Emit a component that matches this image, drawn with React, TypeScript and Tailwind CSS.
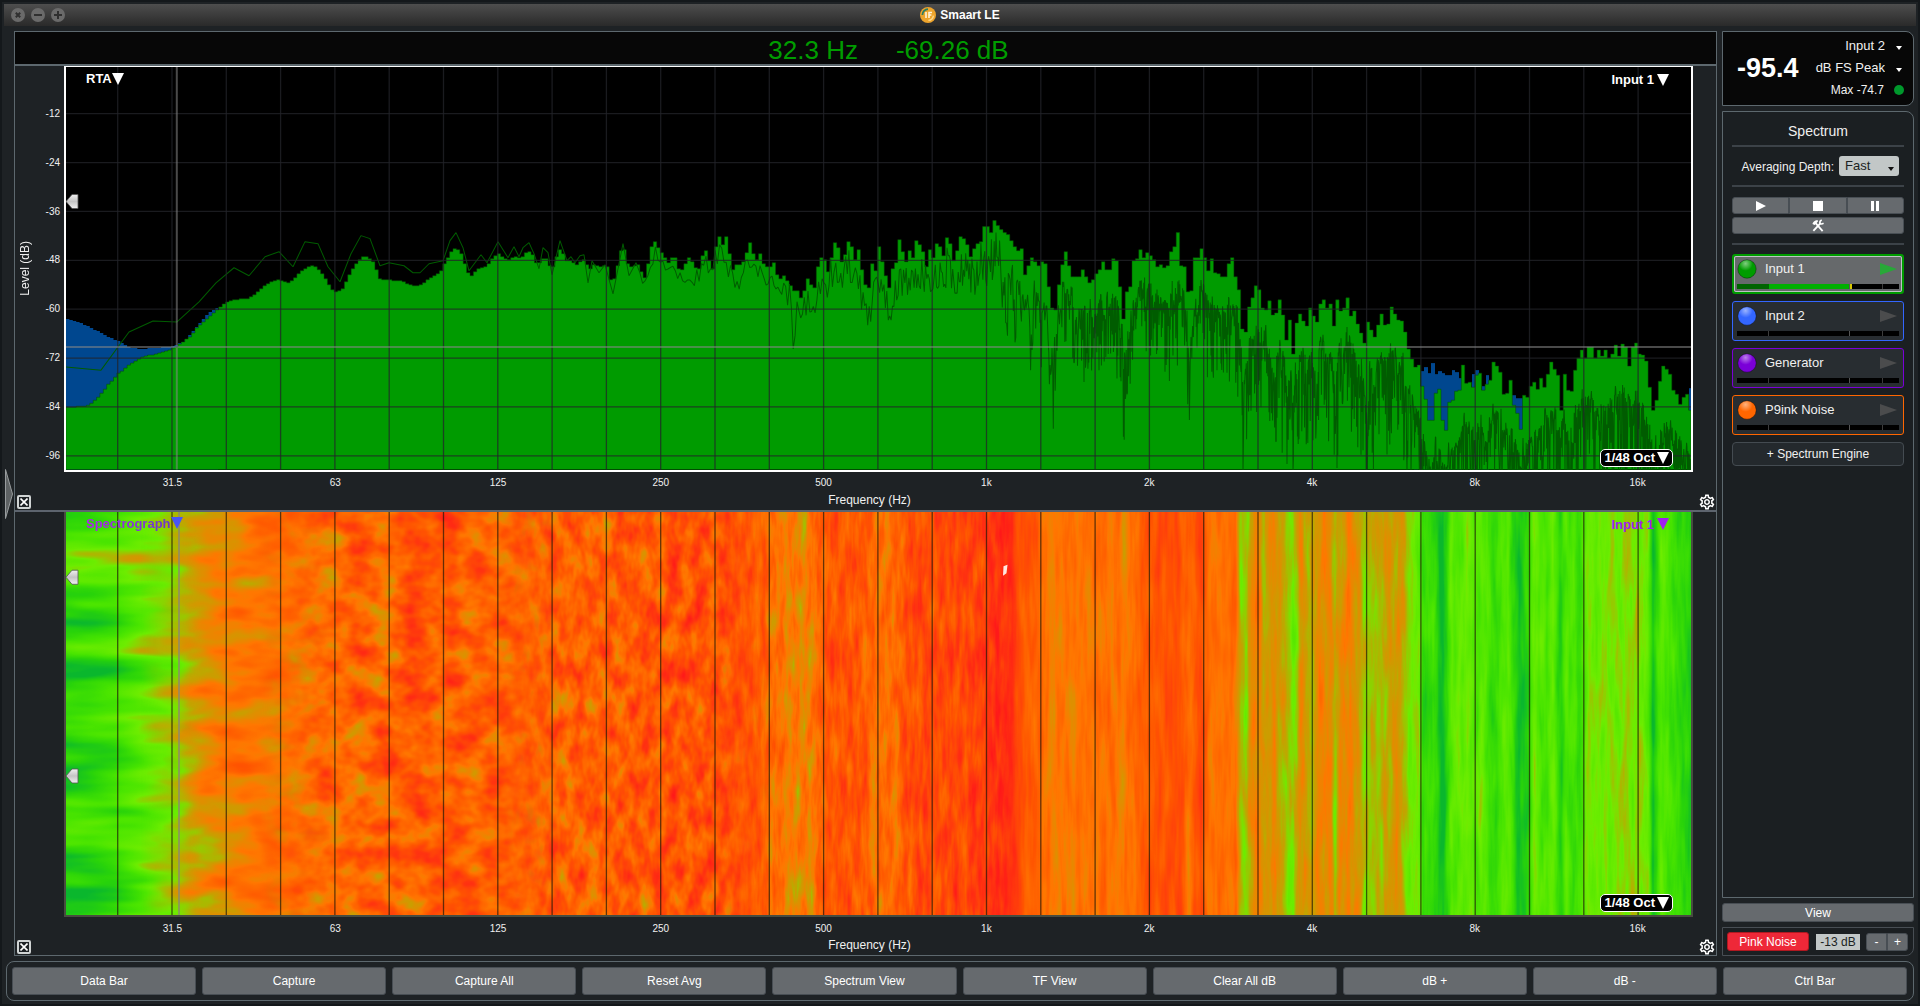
import { useMemo, useState } from 'react';
import { MdOutlineSettings } from 'react-icons/md';

// Plot coordinates: x runs 66..1691, y runs 0 dB at 67 down to 468
const LEFT = 66;
const TOP = 67;
const WIDTH = 1625;
const HEIGHT = 401;
const BAR = 3.395;

type Point = [number, number];

const lowCurve: Point[] = [
  [66, 406], [86, 405], [93, 401], [100, 394], [107, 385], [118, 373], [130, 363], [143, 356], [155, 353], [167, 350],
  [176, 346], [183, 341], [190, 336], [197, 327], [205, 320], [212, 313], [220, 306], [227, 301], [233, 299], [247, 298],
  [256, 293], [267, 283], [278, 279], [290, 282], [300, 272], [306, 267], [314, 265], [322, 272], [333, 290], [337, 292],
  [343, 288], [351, 271], [358, 260], [363, 256], [368, 256], [374, 262], [380, 278], [384, 279], [400, 280], [408, 283],
  [416, 286], [424, 282], [432, 276], [440, 272], [447, 258], [452, 250], [456, 247], [462, 254], [468, 272], [472, 275],
  [478, 268], [487, 266], [492, 258], [498, 252], [504, 258], [510, 259], [514, 256], [522, 257], [528, 250], [532, 252],
  [536, 262], [540, 262], [545, 255], [552, 270], [557, 255], [561, 247], [566, 260], [571, 260], [577, 264], [585, 258],
  [589, 270], [594, 264], [601, 266], [607, 264], [612, 283], [616, 275], [620, 252], [624, 246], [627, 262], [631, 266],
  [640, 263],
];

// One value per 1/48 octave band, starting at x = 640
const midBars = [
  271, 277, 263, 246, 241, 247, 252, 257, 262, 257, 257, 268, 269, 263, 257, 261, 267, 268, 255, 250, 260, 268, 246, 236,
  244, 236, 253, 269, 264, 264, 261, 252, 242, 253, 259, 253, 263, 266, 266, 262, 274, 278, 275, 280, 285, 290, 290, 297,
  290, 278, 284, 287, 266, 257, 259, 271, 257, 242, 247, 261, 254, 241, 246, 259, 249, 269, 284, 287, 263, 270, 246, 261,
  275, 287, 268, 262, 239, 251, 261, 250, 257, 240, 244, 251, 266, 249, 257, 243, 246, 255, 237, 243, 260, 250, 236, 238,
  244, 256, 248, 243, 241, 226, 226, 232, 220, 225, 229, 232, 234, 240, 246, 250, 248, 274, 265, 257, 261, 265, 261, 263,
  286, 307, 309, 284, 264, 251, 265, 276, 276, 276, 269, 276, 282, 279, 273, 269, 261, 269, 269, 258, 260, 286, 318, 291,
  286, 260, 258, 249, 257, 252, 255, 259, 266, 264, 267, 265, 251, 246, 232, 265, 266, 291, 290, 257, 257, 248, 257, 270,
  258, 272, 273, 276, 276, 263, 257, 276, 289, 328, 331, 306, 297, 285, 289, 307, 309, 300, 314, 312, 299,
];

const highBars = [
  314, 339, 319, 353, 322, 313, 320, 325, 307, 315, 321, 303, 299, 307, 303, 325, 299, 310, 307, 297, 315, 310, 323, 332,
  342, 321, 329, 336, 324, 313, 324, 323, 306, 313, 319, 320, 331, 348, 358, 366, 364, 385, 398, 419, 419, 392, 388, 419,
  429, 401, 399, 390, 389, 364, 382, 381, 386, 374, 372, 389, 383, 379, 361, 365, 371, 393, 392, 379, 404, 412, 428, 394,
  396, 385, 381, 388, 377, 386, 373, 361, 368, 374, 409, 373, 389, 390, 369, 357, 349, 357, 346, 346, 357, 349, 355, 349,
  357, 353, 344, 355, 343, 346, 365, 346, 342, 353, 354, 360, 386, 409, 399, 380, 365, 368, 373, 389, 393, 403, 396, 393,
  409,
];

const blueCurve: Point[] = [
  [66, 318], [78, 321], [90, 326], [103, 333], [118, 340], [128, 346], [140, 348], [155, 347], [170, 346], [178, 343],
  [186, 340], [190, 334], [200, 322], [210, 311], [218, 307],
];

// [x, width, y]
const blueBlocks: [number, number, number][] = [
  [1414, 4, 366], [1421, 4, 370], [1424, 4, 366], [1428, 4, 372], [1431, 4, 362], [1435, 4, 373], [1438, 4, 370],
  [1441, 4, 372], [1445, 7, 374], [1452, 3, 369], [1455, 4, 371], [1458, 4, 377], [1472, 4, 373], [1475, 4, 369],
  [1482, 4, 385], [1486, 3, 374], [1512, 4, 394], [1516, 7, 397], [1689, 2, 387],
];

const lowTrace: Point[] = [
  [66, 366], [101, 369], [129, 331], [153, 320], [177, 321], [199, 301], [216, 282], [234, 267], [249, 275], [265, 256],
  [279, 251], [293, 266], [305, 241], [318, 243], [328, 266], [340, 281], [351, 253], [361, 235], [370, 238], [380, 265],
  [389, 262], [404, 265], [413, 272], [420, 272], [429, 263], [443, 260], [450, 240], [456, 232], [463, 247], [469, 270],
  [481, 254], [487, 262], [498, 241], [508, 257], [514, 246], [519, 256], [523, 247], [529, 242], [534, 253], [539, 268],
  [543, 247], [548, 252], [552, 274], [560, 240], [567, 260], [571, 256], [575, 262], [580, 255], [584, 254], [588, 282],
  [592, 260], [599, 272], [605, 264], [613, 293], [623, 243], [629, 275], [636, 262],
];

const interpolate = (points: Point[], x: number) => {
  const i = points.findIndex(p => p[0] >= x);
  if (i <= 0) return points[i === 0 ? 0 : points.length - 1][1];
  const [x0, y0] = points[i - 1];
  const [x1, y1] = points[i];
  return y0 + ((y1 - y0) * (x - x0)) / (x1 - x0);
};

const barTop = (x: number) => {
  if (x < 640) return Math.round(interpolate(lowCurve, x));
  if (x < 1281.5) return midBars[Math.min(midBars.length - 1, Math.floor((x - 640) / 3.4))];
  return highBars[Math.min(highBars.length - 1, Math.floor((x - 1281.5) / 3.4))];
};

const stepPath = (from: number, to: number, top: (x: number) => number) => {
  let d = `M${from} 468`;
  for (let x = from; x < to; x += BAR) {
    const y = top(x + BAR / 2);
    d += `V${y}H${Math.min(x + BAR, to).toFixed(1)}`;
  }
  return d + 'V468Z';
};

const random = (seed: number) => () => {
  seed = (seed * 16807) % 2147483647;
  return seed / 2147483647;
};

// Deep narrow notches in the FFT trace: [x, depth]
const notches: Point[] = [
  [793, 48], [870, 36], [890, 34], [1054, 40], [1124, 60], [1190, 72], [1244, 80], [1274, 50], [1287, 45], [1294, 40],
  [1317, 60], [1336, 55], [1366, 60], [1374, 40],
];

// Narrow band FFT trace: gets denser and falls further below the bands as frequency rises
const fftPath = () => {
  const rnd = random(4821);
  let d = 'M' + lowTrace.map(p => p.join(' ')).join('L');
  let x = 640;
  let drift = 0;
  while (x < 1691) {
    const t = (x - 640) / 1051;
    const r = rnd();
    drift = drift * 0.8 + (rnd() - 0.5) * 14 * Math.min(1, t * 3);
    const base = (barTop(x) * 2 + barTop(x - 4) + barTop(x + 4)) / 4;
    const near = notches.reduce((sum, [nx, depth]) => sum + Math.max(0, 1 - Math.abs(nx - x) / 3.5) * depth, 0);
    const depth = x < 1000
      ? 1 + Math.abs(drift) + r * (14 + t * 90)
      : 20 + t * 26 + drift + r * 18 + r * r * r * r * (30 + t * 70);
    d += `L${x.toFixed(1)} ${Math.min(470, base + depth + near * (0.4 + r * 0.5)).toFixed(1)}`;
    x += Math.max(0.4, 2.6 - t * 5);
  }
  return d;
};

const verticals = Array.from({ length: 29 }, (_, i) => 117.7 + i * 54.3);
const horizontals = Array.from({ length: 8 }, (_, i) => 113.5 + i * 48.7);

// Spectrograph level (0..1) across the frequency axis
const levels: Point[] = [
  [66, 0.17], [117, 0.23], [140, 0.32], [172, 0.42], [190, 0.51], [215, 0.59], [250, 0.63], [335, 0.67], [390, 0.71],
  [445, 0.75], [500, 0.71], [584, 0.71], [662, 0.76], [736, 0.77], [760, 0.73], [772, 0.66], [801, 0.59], [814, 0.63],
  [830, 0.77], [861, 0.75], [877, 0.65], [898, 0.68], [908, 0.79], [950, 0.8], [987, 0.84], [995, 0.92], [1012, 0.9],
  [1020, 0.77], [1039, 0.7], [1055, 0.58], [1063, 0.64], [1086, 0.64], [1119, 0.66], [1123, 0.59], [1131, 0.67],
  [1149, 0.74], [1180, 0.79], [1189, 0.65], [1201, 0.82], [1209, 0.66], [1236, 0.66], [1241, 0.44], [1247, 0.41],
  [1251, 0.57], [1259, 0.6], [1264, 0.5], [1274, 0.56], [1285, 0.48], [1293, 0.39], [1300, 0.54], [1308, 0.49],
  [1315, 0.52], [1322, 0.59], [1331, 0.59], [1335, 0.43], [1340, 0.57], [1358, 0.57], [1364, 0.42], [1376, 0.45],
  [1387, 0.5], [1400, 0.52], [1407, 0.42], [1419, 0.36], [1423, 0.14], [1433, 0.2], [1443, 0], [1451, 0.3],
  [1470, 0.35], [1476, 0.26], [1481, 0.35], [1492, 0.18], [1508, 0.3], [1519, 0.02], [1529, 0.16], [1534, 0.34],
  [1547, 0.24], [1553, 0.34], [1561, 0.1], [1566, 0.26], [1580, 0.2], [1588, 0.36], [1637, 0.41], [1648, 0.34],
  [1653, 0.03], [1661, 0.3], [1672, 0.22], [1691, 0.1],
];

const zones = [
  { x: 66, fade: 0, freq: '0.006 0.035', gain: 0.7, seed: 14 },
  { x: 200, fade: 60, freq: '0.016 0.04', gain: 0.45, seed: 8 },
  { x: 330, fade: 70, freq: '0.035 0.045', gain: 0.6, seed: 5 },
  { x: 560, fade: 60, freq: '0.075 0.035', gain: 0.6, seed: 12 },
  { x: 770, fade: 60, freq: '0.13 0.022', gain: 0.42, seed: 7 },
  { x: 1020, fade: 20, freq: '0.13 0.012', gain: 0.28, seed: 21 },
];

const xTicks = ['31.5', '63', '125', '250', '500', '1k', '2k', '4k', '8k', '16k'];
const yTicks = ['-12', '-24', '-36', '-48', '-60', '-72', '-84', '-96'];

const engines = [
  { name: 'Input 1', color: '#009c00', border: 'border-[#009c00]', active: true },
  { name: 'Input 2', color: '#3366ff', border: 'border-[#3366ff]', active: false },
  { name: 'Generator', color: '#7a00d8', border: 'border-[#7a00d8]', active: false },
  { name: 'P9ink Noise', color: '#ff6600', border: 'border-[#ff6600]', active: false },
];

const commands = [
  'Data Bar', 'Capture', 'Capture All', 'Reset Avg', 'Spectrum View', 'TF View', 'Clear All dB', 'dB +', 'dB -', 'Ctrl Bar',
];

function Triangle({ className }: { className?: string }) {
  return (
    <svg viewBox="0 0 12 12" className={className} fill="currentColor" aria-hidden="true">
      <path d="M0 0H12L6 12Z" />
    </svg>
  );
}

function Marker({ y }: { y: number }) {
  return (
    <path
      d={`M66 ${y}L72 ${y - 7}H78V${y + 7}H72Z`}
      fill="url(#marker)"
      stroke="#555"
      strokeWidth="0.8"
    />
  );
}

function Grid({ rows }: { rows: boolean }) {
  return (
    <g stroke={rows ? '#23242a' : '#201808'} strokeOpacity={rows ? 0.75 : 0.7} strokeWidth="1.3">
      {verticals.map(x => <path key={x} d={`M${x} 0V1000`} />)}
      {rows && horizontals.map(y => <path key={y} d={`M66 ${y}H1691`} />)}
    </g>
  );
}

function RtaPlot() {
  const green = useMemo(() => stepPath(66, 1691, barTop), []);
  const blue = useMemo(() => stepPath(66, 218, x => Math.round(interpolate(blueCurve, x))), []);
  const trace = useMemo(fftPath, []);

  return (
    <svg
      viewBox={`${LEFT} ${TOP} ${WIDTH} ${HEIGHT}`}
      preserveAspectRatio="none"
      className="block h-full w-full bg-black"
      role="img"
      aria-label="RTA"
    >
      <defs>
        <linearGradient id="marker" x1="0" y1="0" x2="0" y2="1">
          <stop offset="0" stopColor="#f0f0f0" />
          <stop offset="0.5" stopColor="#c4c4c4" />
          <stop offset="1" stopColor="#f0f0f0" />
        </linearGradient>
      </defs>
      <path d={blue} fill="#00478f" />
      {blueBlocks.map(([x, w, y]) => <rect key={x} x={x} y={y} width={w} height={468 - y} fill="#00478f" />)}
      <path d={green} fill="#009b00" stroke="#004c00" strokeWidth="0.5" />
      <path d={trace} fill="none" stroke="#005c00" strokeWidth="1" strokeLinejoin="bevel" />
      <Grid rows />
      <path d="M176.8 67V468M66 346H1691" stroke="#868686" strokeOpacity="0.55" strokeWidth="2" />
      <Marker y={201} />
    </svg>
  );
}

function SpectrographPlot() {
  return (
    <svg
      viewBox={`${LEFT} 512 ${WIDTH} 402`}
      preserveAspectRatio="none"
      className="block h-full w-full bg-[#ff7800]"
      role="img"
      aria-label="Spectrograph"
    >
      <defs>
        <linearGradient id="levels" gradientUnits="userSpaceOnUse" x1="66" y1="0" x2="1691" y2="0">
          {levels.map(([x, v]) => {
            const g = Math.round(v * 255);
            return <stop key={x} offset={(x - LEFT) / WIDTH} stopColor={`rgb(${g},${g},${g})`} />;
          })}
        </linearGradient>
        {zones.map(z => (
          <g key={z.x}>
            <filter
              id={`noise${z.x}`}
              filterUnits="userSpaceOnUse"
              x={z.x - z.fade}
              y="512"
              width={1691 - z.x + z.fade}
              height="402"
              colorInterpolationFilters="sRGB"
            >
              <feTurbulence type="fractalNoise" baseFrequency={z.freq} numOctaves="3" seed={z.seed} />
              <feColorMatrix values="0 0 0 1 0  0 0 0 1 0  0 0 0 1 0  0 0 0 0 1" result="n" />
              <feComposite
                in="SourceGraphic"
                in2="n"
                operator="arithmetic"
                k1="0"
                k2="1"
                k3={z.gain}
                k4={-z.gain / 2}
              />
              <feComponentTransfer>
                <feFuncR type="table" tableValues="0.04 0.16 0.29 0.43 0.78 1 1 1 1" />
                <feFuncG type="table" tableValues="0.72 0.83 0.9 0.93 0.63 0.47 0.34 0.21 0.1" />
                <feFuncB type="table" tableValues="0.18 0.04 0 0 0 0 0 0.06 0.1" />
              </feComponentTransfer>
            </filter>
            <linearGradient
              id={`fade${z.x}`}
              gradientUnits="userSpaceOnUse"
              x1={z.x - z.fade}
              y1="0"
              x2={z.x + 1}
              y2="0"
            >
              <stop offset="0" stopColor={z.fade ? '#000' : '#fff'} />
              <stop offset="1" stopColor="#fff" />
            </linearGradient>
            <mask id={`mask${z.x}`} maskUnits="userSpaceOnUse" x="66" y="512" width="1625" height="402">
              <rect x={z.x - z.fade} y="512" width={1691 - z.x + z.fade} height="402" fill={`url(#fade${z.x})`} />
            </mask>
          </g>
        ))}
      </defs>
      {zones.map(z => (
        <g key={z.x} mask={`url(#mask${z.x})`}>
          <rect x="66" y="512" width="1625" height="402" fill="url(#levels)" filter={`url(#noise${z.x})`} />
        </g>
      ))}
      <path d="M1003.5 566L1007.5 564.5L1006.5 573L1003 575.5Z" fill="#ffe8e0" />
      <Grid rows={false} />
      <path d="M179 512V914" stroke="#8a8a70" strokeOpacity="0.75" strokeWidth="2" />
      <Marker y={577} />
      <Marker y={775} />
    </svg>
  );
}

function Pane({ kind }: { kind: 'rta' | 'spectrograph' }) {
  const rta = kind === 'rta';
  const tint = rta ? 'text-white' : 'text-[#a020f0]';
  return (
    <section className="flex min-h-0 flex-1 flex-col">
      <div className="flex min-h-0 flex-1">
        <div className="flex w-[49px] shrink-0">
          {rta && (
            <>
              <div className="flex w-5 items-center justify-center text-xs">
                <span className="rotate-180 whitespace-nowrap [writing-mode:vertical-rl]">Level (dB)</span>
              </div>
              <div className="-mb-2 grid flex-1 grid-rows-8 items-center pt-[23px] pr-1 text-right text-[10px]">
                {yTicks.map(t => <span key={t}>{t}</span>)}
              </div>
            </>
          )}
        </div>
        <div className={`relative min-w-0 flex-1 border-x-2 border-b-2 ${rta ? 'border-t border-white' : 'border-[#484c40]'}`}>
          {rta ? <RtaPlot /> : <SpectrographPlot />}
          <button className={`absolute top-[2px] left-5 flex items-center text-[13px] font-bold ${tint}`}>
            {rta ? (
              'RTA'
            ) : (
              <span className="bg-linear-to-r from-[#b020f0] to-[#6838c8] bg-clip-text text-transparent">Spectrograph</span>
            )}
            <Triangle className={rta ? 'size-3' : 'size-3 text-[#4855f5]'} />
          </button>
          <button className={`absolute top-[3px] right-[22px] flex items-center gap-[3px] text-[13px] font-bold ${tint}`}>
            Input 1
            <Triangle className="size-3" />
          </button>
          <button className="absolute right-[18px] bottom-[3px] flex h-[18px] items-center gap-[2px] rounded-[5px] border border-white bg-black px-[3px] text-[13px] font-bold text-white">
            1/48 Oct
            <Triangle className="size-3" />
          </button>
        </div>
        <div className="w-[23px] shrink-0" />
      </div>
      <div className="-mr-[3px] ml-[76px] grid h-[22px] shrink-0 grid-cols-10 items-center text-center text-[10px]">
        {xTicks.map(t => <span key={t}>{t}</span>)}
      </div>
      <div className="flex h-4 shrink-0 items-center text-xs">
        <button className="ml-[2px] grid size-[14px] place-items-center rounded-[2px] border-2 border-[#d0d4d4]" aria-label="Close pane">
          <svg viewBox="0 0 8 8" className="size-2" stroke="#fff" strokeWidth="1.6">
            <path d="M0.5 0.5L7.5 7.5M7.5 0.5L0.5 7.5" />
          </svg>
        </button>
        <span className="-mt-1 flex-1 pl-[10px] text-center">Frequency (Hz)</span>
        <button aria-label="Pane settings" className="text-white">
          <MdOutlineSettings className="size-[18px]" />
        </button>
      </div>
    </section>
  );
}

function Engine({ name, color, border, active }: (typeof engines)[number]) {
  const id = name.replace(/\s/g, '');
  return (
    <button
      className={`block h-10 w-full rounded-[3px] text-left ${border} ${active ? 'border-2 bg-[#66696b]' : 'border bg-[#282d31]'}`}
    >
      <div
        className={`flex h-full flex-col justify-between rounded-[2px] ${active ? 'border border-[#bfc3c5] px-[2px] pt-[2px] pb-[2px]' : 'px-1 pt-1 pb-1'}`}
      >
        <div className="flex items-center">
          <svg viewBox="0 0 20 20" className="size-5">
            <defs>
              <radialGradient id={`shine${id}`} cx="0.42" cy="0.2" r="0.4">
                <stop offset="0" stopColor="#fff" stopOpacity="0.5" />
                <stop offset="1" stopColor="#fff" stopOpacity="0" />
              </radialGradient>
            </defs>
            <circle cx="10" cy="10" r="9.2" fill={color} stroke="#000" strokeOpacity="0.35" />
            <circle cx="10" cy="10" r="9" fill={`url(#shine${id})`} />
          </svg>
          <span className="flex-1 pl-2 text-[13px] leading-5">{name}</span>
          <svg viewBox="0 0 17 12" className="mr-[2px] h-3 w-[17px]" fill={active ? '#28a838' : '#4b4c4d'}>
            <path d="M0 0L17 6L0 12Z" />
          </svg>
        </div>
        <div className="flex h-[5px] bg-black">
          <div className={`w-1/5 ${active ? 'bg-[#006400]' : 'border-r border-[#3c3c3c]'}`} />
          <div className={`w-1/2 border-r border-[#555] ${active ? 'bg-[#00b000]' : ''}`} />
          <div className={`w-1/5 border-r border-[#3c3c3c] ${active ? 'shadow-[inset_2px_0_0_#d8c800]' : ''}`} />
        </div>
      </div>
    </button>
  );
}

function PeakSelect({ label, value }: { label: string; value: string }) {
  return (
    <label className="flex items-center justify-end gap-[11px]">
      <select aria-label={label} className="appearance-none bg-transparent text-[13px] leading-[22px] outline-none [text-align-last:right]">
        <option>{value}</option>
      </select>
      <svg viewBox="0 0 6 4" className="mt-1 mr-[2px] h-1 w-[6px]" fill="#fff">
        <path d="M0 0H6L3 4Z" />
      </svg>
    </label>
  );
}

const key = 'bg-[#666a6e] border border-[#484e54] flex items-center justify-center text-white';

export default function App() {
  const [depth, setDepth] = useState('Fast');

  return (
    <div className="flex h-screen flex-col bg-[#1e2225] px-1 pt-1 pb-[5px] font-['Liberation_Sans',Arial,sans-serif] text-[#f0f0f0] shadow-[inset_0_0_0_2px_#14181b]">
      {/* Title bar */}
      <header className="relative flex h-[22px] shrink-0 items-center justify-center bg-linear-to-b from-[#4e4e4e] to-[#2a2a2a]">
        <div className="absolute left-[7px] flex gap-[6px]">
          {['M4.8 4.8L9.2 9.2M9.2 4.8L4.8 9.2', 'M3 7H11', 'M3 7H11M7 3V11'].map((d, i) => (
            <button key={d} aria-label={['Close', 'Minimize', 'Zoom'][i]}>
              <svg viewBox="0 0 14 14" className="block size-[14px]">
                <circle cx="7" cy="7" r="7" fill="#6a6a6a" />
                <path d={d} stroke="#2f2f2f" strokeWidth="2" />
              </svg>
            </button>
          ))}
        </div>
        <svg viewBox="0 0 16 16" className="mr-1 size-4">
          <circle cx="8" cy="8" r="8" fill="#eda42c" />
          <path d="M2.4 8A5.8 5.8 0 0 1 8 2.2" fill="none" stroke="#2d7d62" strokeWidth="1.8" />
          <path d="M13.4 8.6A5.6 5.6 0 0 1 8.4 13.4" fill="none" stroke="#ffd98c" strokeWidth="1.4" />
          <path d="M6 5V11M9 11V5.5H12M9 8H11.4" fill="none" stroke="#fff3d8" strokeWidth="1.6" />
        </svg>
        <h1 className="text-xs font-bold text-white">Smaart LE</h1>
      </header>

      <div className="flex min-h-0 flex-1 pt-[5px]">
        <div className="flex w-[10px] shrink-0 items-center">
          <button aria-label="Show data bar" className="pl-px">
            <svg viewBox="0 0 8 50" className="block h-[50px] w-2">
              <path d="M0.5 0.5L7.5 25L0.5 49.5Z" fill="#5e6264" stroke="#989c9e" />
            </svg>
          </button>
        </div>

        {/* Graph area */}
        <main className="flex min-w-0 flex-1 flex-col border border-[#5d686e]">
          <div className="flex h-8 shrink-0 items-center justify-center gap-[38px] bg-[#070707] pt-1 pl-[46px] text-[26px] text-[#009c00]">
            <span>32.3 Hz</span>
            <span>-69.26 dB</span>
          </div>
          <div className="h-[2px] shrink-0 bg-[#5d686e]" />
          <Pane kind="rta" />
          <div className="h-[2px] shrink-0 bg-[#5d646e]" />
          <Pane kind="spectrograph" />
        </main>

        {/* Control bar */}
        <aside className="ml-[5px] mr-[2px] flex w-48 shrink-0 flex-col">
          <div className="flex h-[75px] items-center rounded-r-lg border border-[#5d686e] bg-[#070707] pr-[9px] pb-[2px] pl-[14px]">
            <div className="flex-1 pt-[2px] text-[27px] font-bold text-white">-95.4</div>
            <div>
              <PeakSelect label="Level source" value="Input 2" />
              <PeakSelect label="Level type" value="dB FS Peak" />
              <div className="flex items-center justify-end gap-[10px] text-xs leading-[22px]">
                Max -74.7
                <span className="size-[10px] rounded-full bg-[#00982c]" />
              </div>
            </div>
          </div>

          <section className="mt-[5px] flex min-h-0 flex-1 flex-col rounded-tr-lg border border-[#5d686e] bg-[#1b1f22] px-[9px]">
            <h2 className="border-b-2 border-[#3c4248] pt-[9px] pb-1 text-center text-sm">Spectrum</h2>
            <div className="flex items-center justify-end border-b-2 border-[#3c4248] py-[9px] pr-[5px]">
              <label htmlFor="depth" className="pt-px pr-[5px] text-xs">Averaging Depth:</label>
              <div className="relative">
                <select
                  id="depth"
                  value={depth}
                  onChange={e => setDepth(e.target.value)}
                  className="block h-5 w-[60px] appearance-none rounded-[3px] bg-[#c2c7c7] pl-[6px] text-[13px] text-[#1b1f22]"
                >
                  <option>Fast</option>
                  <option>Slow</option>
                </select>
                <svg viewBox="0 0 6 4" className="pointer-events-none absolute right-[5px] bottom-[5px] h-1 w-[6px]" fill="#111">
                  <path d="M0 0H6L3 4Z" />
                </svg>
              </div>
            </div>
            <div className="border-b-2 border-[#3c4248] pt-[10px] pb-[9px]">
              <div className="grid grid-cols-3">
                <button className={`${key} h-[17px] rounded-l-[3px]`} aria-label="Play">
                  <svg viewBox="0 0 10 10" className="size-[10px]" fill="currentColor"><path d="M0 0L10 5L0 10Z" /></svg>
                </button>
                <button className={`${key} h-[17px]`} aria-label="Stop">
                  <svg viewBox="0 0 10 10" className="size-[10px]" fill="currentColor"><path d="M0 0H10V10H0Z" /></svg>
                </button>
                <button className={`${key} h-[17px] rounded-r-[3px]`} aria-label="Pause">
                  <svg viewBox="0 0 10 10" className="size-[10px]" fill="currentColor"><path d="M1 0H4V10H1ZM6 0H9V10H6Z" /></svg>
                </button>
              </div>
              <button className={`${key} mt-[3px] h-[17px] w-full rounded-[3px]`} aria-label="Engine settings">
                <svg viewBox="0 0 14 14" className="h-[13px] w-[14px]" fill="none" stroke="currentColor">
                  <path d="M4 4L12 13" strokeWidth="2" />
                  <path d="M1 5.5Q1.5 2 6.5 1L7 2.6L3.4 6.4Z" fill="currentColor" stroke="none" />
                  <path d="M2 12.8L10 4.2" strokeWidth="2" />
                  <path d="M11 1Q8.6 2 9 4.4Q10.2 6.2 13 4.6" strokeWidth="1.7" />
                </svg>
              </button>
            </div>
            <div className="flex flex-col gap-[7px] pt-[9px]">
              {engines.map(e => <Engine key={e.name} {...e} />)}
              <button className="h-6 rounded-[4px] border border-[#444b51] bg-[#24292d] text-xs">+ Spectrum Engine</button>
            </div>
          </section>

          <button className={`${key} mt-[5px] h-[19px] shrink-0 rounded-[3px] text-xs`}>View</button>

          <div className="mt-[5px] flex h-[29px] shrink-0 items-center rounded-br-lg border border-[#484e54] bg-[#1b1f22] px-[4px] text-xs">
            <button className="h-[19px] w-[82px] rounded-[3px] border border-[#b01820] bg-[#ee2838] text-white">Pink Noise</button>
            <output className="ml-[7px] h-4 w-11 bg-[#c2c7c7] text-center leading-4 text-[#1b1f22]">-13 dB</output>
            <button className={`${key} ml-[6px] h-[18px] w-[21px] rounded-l-[3px]`}>-</button>
            <button className={`${key} h-[18px] w-[21px] rounded-r-[3px]`}>+</button>
          </div>
        </aside>
      </div>

      {/* Command bar */}
      <nav className="mt-[5px] mr-[2px] ml-[2px] grid h-10 shrink-0 grid-cols-10 gap-[6px] rounded-lg border border-[#5d686e] pr-[6px] pl-[5px] py-[5px]">
        {commands.map(c => (
          <button key={c} className={`${key} rounded-[3px] text-xs`}>{c}</button>
        ))}
      </nav>
    </div>
  );
}
